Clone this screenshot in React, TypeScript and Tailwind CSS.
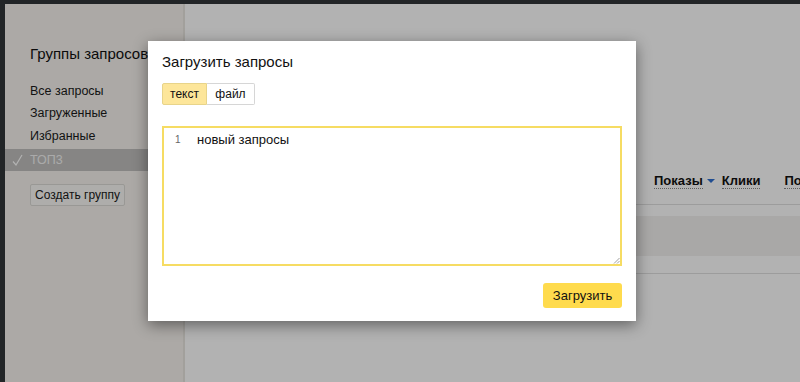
import React from "react"

const font = { fontFamily: '"Liberation Sans", Arial, sans-serif' }

const groups = ["Все запросы", "Загруженные", "Избранные"]

const Sidebar = () => {
  return (
    <aside className="w-[180px] shrink-0 bg-[#f6f3ee] border-r-2 border-[#e8e5e0] flex flex-col">
      <h2 className="pl-[25px] mt-[40px] text-[15px] leading-[20px] text-[#111] whitespace-nowrap">
        Группы запросов
      </h2>
      <ul className="mt-[16px] text-[12.5px] text-[#1a1a1a]">
        {groups.map((g, i) => (
          <li
            key={g}
            className={
              "pl-[25px] flex items-center " + (i === 0 ? "h-[22px]" : "h-[23px]")
            }
          >
            {g}
          </li>
        ))}
        <li className="h-[22px] mt-px flex items-center bg-[#c0bfbd] text-[#f4f4f4] relative pl-[25px]">
          <svg
            className="absolute left-[7px] top-[5px]"
            width="11"
            height="12"
            viewBox="0 0 11 12"
            fill="none"
          >
            <path d="M1 7.5 L4 11 L10 1" stroke="#fff" strokeWidth="1.2" />
          </svg>
          ТОП3
        </li>
      </ul>
      <button className="ml-[25px] mt-[13px] w-[95px] h-[22px] rounded-[2px] border border-[#dcdad6] bg-[#f9f8f5] text-[12px] text-[#1a1a1a]">
        Создать группу
      </button>
    </aside>
  )
}

const Main = () => {
  return (
    <main className="flex-1 bg-white relative overflow-hidden">
      <div className="flex justify-end mt-[37px]">
        <button className="h-[22px] w-[30px] -mr-[15px] border border-[#cfcfcf] rounded-[2px] text-[13px] text-left pl-[6px]">
          З
        </button>
      </div>
      <div className="mt-[108px] flex items-center h-[20px] pl-[469px] text-[13px] font-bold text-[#111] whitespace-nowrap">
        <span className="border-b border-dotted border-[#888] leading-[15px]">Показы</span>
        <svg className="ml-[4px]" width="8" height="5" viewBox="0 0 8 5">
          <path d="M0 0 H8 L4 4 Z" fill="#2f6fd0" />
        </svg>
        <span className="ml-[7px] border-b border-dotted border-[#888] leading-[15px]">Клики</span>
        <span className="ml-[24px] border-b border-dotted border-[#888] leading-[15px]">Позиция</span>
      </div>
      <div className="mt-[13px] border-t border-[#e0e0e0]" />
      <div className="mt-[11px] h-[40px] bg-[#f3f1ef]" />
      <div className="mt-[17px] border-t border-[#e0e0e0]" />
    </main>
  )
}

const UploadModal = () => {
  return (
    <div className="absolute left-[148px] top-[41px] w-[488px] h-[280px] bg-white shadow-[0_4px_14px_rgba(0,0,0,0.45)] px-[14px] pt-[12px]">
      <h3 className="text-[15px] leading-[18px] text-[#111]">Загрузить запросы</h3>
      <div className="mt-[12px] flex h-[22px] text-[12px] text-[#111]">
        <button className="w-[45px] h-full rounded-l-[2px] bg-[#fde69a] border border-[#e8d48a]">текст</button>
        <button className="w-[48px] h-full rounded-r-[2px] bg-white border border-l-0 border-[#d6d6d6]">файл</button>
      </div>
      <div className="mt-[21px] h-[140px] border-2 border-[#f6dc63] relative flex items-start pt-[3px] text-[13px] text-[#111]">
        <span className="w-[24px] text-right text-[10px] text-[#666] leading-[18px] pr-[11px] shrink-0 pl-[11px]">1</span>
        <span className="ml-[9px] leading-[18px]">новый запросы</span>
        <svg className="absolute right-0 bottom-0" width="7" height="7" viewBox="0 0 7 7">
          <path d="M1 6.5 L6.5 1 M4 6.5 L6.5 4" stroke="#888" strokeWidth="0.8" />
        </svg>
      </div>
      <div className="mt-[17px] flex justify-end">
        <button className="w-[79px] h-[25px] rounded-[3px] bg-[#ffdb4d] text-[13px] text-[#111]">Загрузить</button>
      </div>
    </div>
  )
}

export default function App() {
  return (
    <div className="w-[800px] h-[382px] relative overflow-hidden bg-[#313539]" style={font}>
      <div className="absolute inset-0 pt-[4px] pl-[5px] flex">
        <div className="flex flex-1">
          <Sidebar />
          <Main />
        </div>
      </div>
      <div className="absolute inset-0 bg-black/30" />
      <UploadModal />
    </div>
  )
}
